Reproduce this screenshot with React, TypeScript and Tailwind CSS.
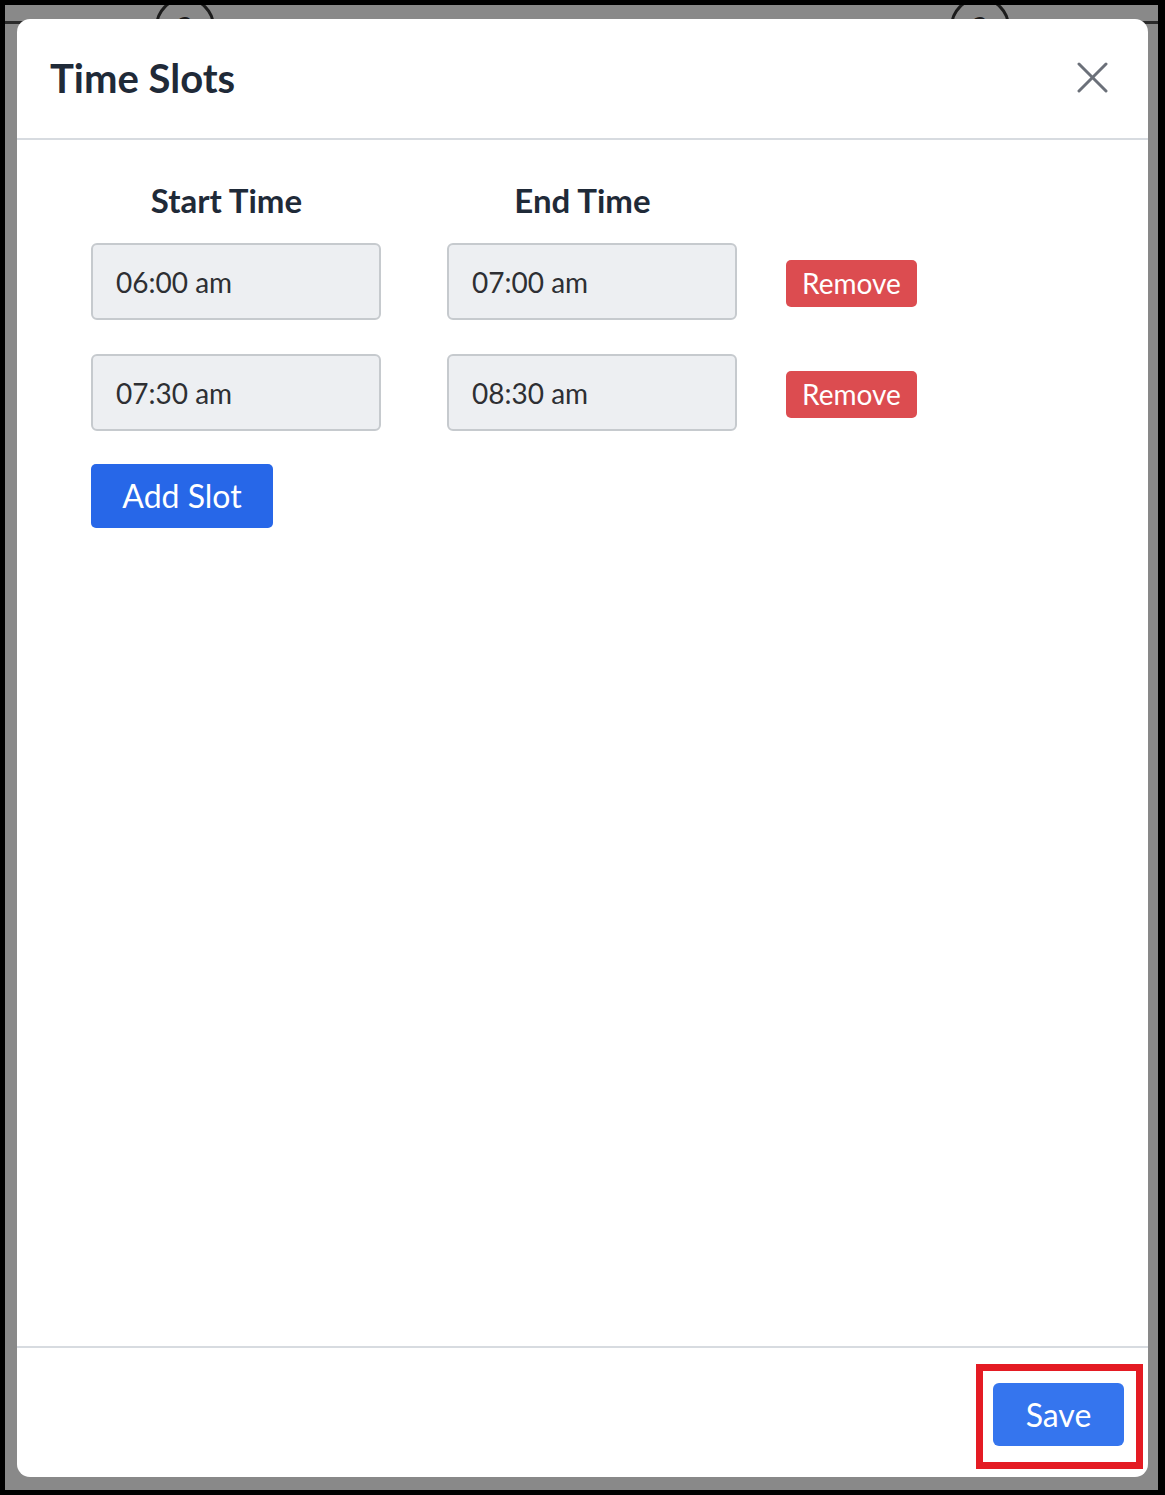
import React from "react";

const slots = [
  { start: "06:00 am", end: "07:00 am" },
  { start: "07:30 am", end: "08:30 am" },
];

function HelpCircle({ left }: { left: number }) {
  return (
    <div
      className="absolute top-[-8px] w-[60px] h-[60px] rounded-full border-[3px] border-[#1c1c1c] flex justify-center"
      style={{ left }}
    >
      <span className="text-[30px] font-bold leading-none text-[#1c1c1c] mt-[12px]">?</span>
    </div>
  );
}

export default function App() {
  return (
    <div
      className="w-[1165px] h-[1495px] bg-black pt-[5px] pl-[5px] pr-[7px] pb-[5px]"
      style={{ fontFamily: "Lato, 'Noto Sans', sans-serif" }}
    >
      <div className="relative w-full h-full bg-[#898989] overflow-hidden pt-[14px] pl-[12px] pr-[10px] pb-[13px]">
        <HelpCircle left={150} />
        <HelpCircle left={945} />
        <div className="absolute left-0 right-0 top-[16px] h-[3px] bg-[#2a2a2a]" />
        <div className="relative z-10 w-full h-full bg-white rounded-[13px] flex flex-col">
          {/* Header */}
          <div className="h-[121px] shrink-0 flex items-center justify-between pl-[33px] pr-[40px] border-b-2 border-[#d7dbe0]">
            <h1 className="text-[40px] font-bold text-[#1f2a38] leading-none mt-[-2px]">Time Slots</h1>
            <svg width="31" height="31" viewBox="0 0 31 31" className="mt-[-2px]">
              <line x1="2" y1="2" x2="29" y2="29" stroke="#6b7079" strokeWidth="3" strokeLinecap="round" />
              <line x1="29" y1="2" x2="2" y2="29" stroke="#6b7079" strokeWidth="3" strokeLinecap="round" />
            </svg>
          </div>

          {/* Body */}
          <div className="flex-1 pt-[40px] pl-[74px]">
            <div className="flex gap-[66px] h-[40px]">
              <div className="w-[290px] pr-[19px] text-center text-[33px] font-bold leading-[40px] text-[#1f2a38]">
                Start Time
              </div>
              <div className="w-[290px] pr-[19px] text-center text-[33px] font-bold leading-[40px] text-[#1f2a38]">
                End Time
              </div>
            </div>
            <div className="mt-[23px] flex flex-col gap-[34px]">
              {slots.map((s, i) => (
                <div key={i} className="flex items-center">
                  <div className="w-[290px] h-[77px] rounded-[6px] border-2 border-[#c6cace] bg-[#edeff2] flex items-center pl-[23px] text-[28px] text-[#2e2f33]">
                    {s.start}
                  </div>
                  <div className="ml-[66px] w-[290px] h-[77px] rounded-[6px] border-2 border-[#c6cace] bg-[#edeff2] flex items-center pl-[23px] text-[28px] text-[#2e2f33]">
                    {s.end}
                  </div>
                  <button className="ml-[49px] mt-[3px] w-[131px] h-[47px] rounded-[5px] bg-[#dc4c50] text-white text-[28px] leading-none flex items-center justify-center">
                    Remove
                  </button>
                </div>
              ))}
            </div>
            <button className="mt-[33px] w-[182px] h-[64px] rounded-[5px] bg-[#2767e8] text-white text-[32px] leading-none flex items-center justify-center">
              Add Slot
            </button>
          </div>

          {/* Footer */}
          <div className="relative h-[131px] shrink-0 border-t-2 border-[#d7dbe0] flex items-start justify-end pt-[35px] pr-[24px]">
            <button className="w-[131px] h-[63px] rounded-[6px] bg-[#3575ee] text-white text-[32px] leading-none flex items-center justify-center">
              Save
            </button>
            <div className="absolute left-[959px] top-[16px] w-[167px] h-[105px] border-[7px] border-[#e41b23] pointer-events-none" />
          </div>
        </div>
      </div>
    </div>
  );
}
